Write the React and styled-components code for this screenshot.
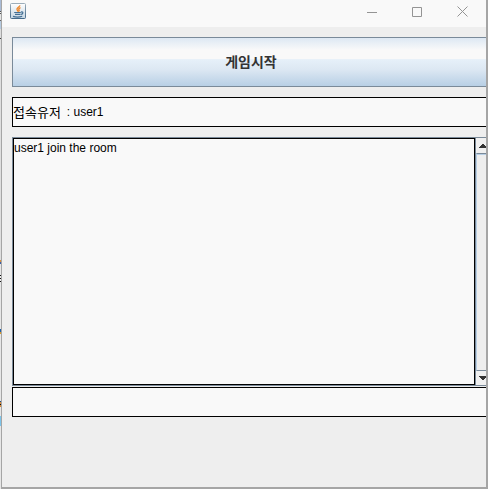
import React, { useState } from "react";
import styled, { createGlobalStyle } from "styled-components";

const GlobalStyle = createGlobalStyle`
  * { box-sizing: border-box; }
  body {
    margin: 0;
    background: #c9d3e0;
    color: #000;
    font: 12px/16px "Liberation Sans", "Noto Sans CJK KR", sans-serif;
  }
`;

const Desktop = styled.div`
  min-height: 100vh;
  display: grid;
  grid-template-columns: 1px minmax(0, 1fr);
`;

const Backdrop = styled.div`
  background: linear-gradient(
    #a9bbd6 0 11px, #555 11px 12px, #eee 12px 13px, #555 13px 14px,
    #e4e4e4 14px 20px, #666 20px 21px, #b5cae0 21px 29px, #ddd 29px 38px,
    #444 38px 39px, #dedede 39px 260px, #d68a3a 260px 262px, #3c5fa5 262px 264px,
    #e6e6e6 264px 275px, #111 275px 276px, #eee 276px 278px, #111 278px 279px,
    #eee 279px 281px, #111 281px 282px, #e6e6e6 282px 329px, #1c5fa8 329px 332px,
    #d99a2c 332px 334px, #e6e6e6 334px 401px, #234f86 401px 402px,
    #d68a3a 402px 404px, #111 404px 405px, #d68a3a 405px 407px, #e6e6e6 407px 416px,
    #7cc4ea 416px 426px, #e6e6e6 426px
  );
`;

const Window = styled.main`
  display: flex;
  flex-direction: column;
  background: #eee;
  border: solid #a5a5a5;
  border-width: 0 2px 2px 1px;
  overflow: hidden;
`;

const TitleBar = styled.header`
  height: 27px;
  display: flex;
  align-items: flex-start;
  justify-content: space-between;
  padding: 3px 1px 0 8px;
  background: #f9f9f9;
`;

const WindowControls = styled.div`
  display: flex;
`;

const ControlButton = styled.button`
  width: 45px;
  height: 16px;
  padding: 0;
  border: 0;
  background: transparent;
  color: #949494;
  display: grid;
  place-items: center;
`;

const Content = styled.section`
  display: flex;
  flex-direction: column;
  gap: 10px;
  padding: 10px 0 0 10px;
  margin-right: -4px;
`;

const StartButton = styled.button`
  height: 50px;
  padding: 0 0 2px;
  border: 1px solid #7a8a99;
  background: linear-gradient(#dde8f3 0%, #f9f9f9 25%, #f9f9f9 43%, #e6f0f9 45%, #dde8f3 65%, #b8cfe5 100%);
  color: #333;
  font: bold 14px/18px "Noto Sans CJK KR", sans-serif;
`;

const UserBar = styled.div`
  height: 30px;
  display: flex;
  align-items: center;
  gap: 6px;
  border: 1px solid #000;
  background: #f9f9f9;
`;

const UserLabel = styled.span`
  font: 13px/16px "Noto Sans CJK KR", sans-serif;
`;

const Room = styled.div`
  display: flex;
  flex-direction: column;
  gap: 1px;
`;

const LogPane = styled.div`
  height: 249px;
  display: grid;
  grid-template-columns: minmax(0, 1fr) 15px;
  border: 1px solid #7a8a99;
  border-right: 0;
`;

const Log = styled.textarea`
  height: 100%;
  margin: 0;
  padding: 1px 0;
  border: 1px solid #000;
  outline: 0;
  resize: none;
  overflow: hidden;
  background: #f9f9f9;
  color: #000;
  font: inherit;
`;

const ScrollBar = styled.div`
  display: grid;
  grid-template-rows: 15px 1fr 14px;
  border-left: 1px solid #7a8a99;
  background: #eee;
`;

const ScrollButton = styled.button`
  padding: 0;
  border: 0;
  background: #f0f0f0;
  color: #333;
  display: grid;
  place-items: center;
`;

const Track = styled.div`
  border: 1px solid #7a8a99;
  border-left-color: #b8cfe5;
  box-shadow: inset 0 1px #b8cfe5;
`;

const MessageInput = styled.input`
  width: 100%;
  height: 30px;
  padding: 0;
  border: 1px solid #000;
  border-radius: 0;
  outline: 0;
  background: #f9f9f9;
  font: inherit;
`;

const JavaIcon = () => (
  <svg width="16" height="16" viewBox="0 0 16 16" fill="none" aria-hidden="true">
    <defs>
      <linearGradient id="tile" x1="0" y1="0" x2="0" y2="1">
        <stop stopColor="#fff" />
        <stop offset="1" stopColor="#c5d5e2" />
      </linearGradient>
      <linearGradient id="edge" x1="0" y1="0" x2="0" y2="1">
        <stop stopColor="#9cadb9" />
        <stop offset="1" stopColor="#44698a" />
      </linearGradient>
    </defs>
    <rect x=".5" y=".5" width="15" height="15" rx="1" fill="url(#tile)" stroke="url(#edge)" />
    <path d="M10 2.3C9.5 4.2 6.4 4.8 7 6.6 7.2 7.4 8 7.8 8 8.8M10.5 4.7C8.7 5.4 8.4 6.2 9 6.8 9.5 7.4 9 8 8.5 8.4" stroke="#ee8424" strokeWidth="1.3" />
    <path d="M4.2 9.5h6.6M5 11.4h5.4M3 13.4c2.6.8 6.6.8 9.2-.1M11 9.1c2.6-.8 2.4 2-.2 2.3" stroke="#446f94" strokeWidth="1.2" />
  </svg>
);

const MinimizeIcon = () => (
  <svg width="11" height="11" viewBox="0 0 11 11" stroke="currentColor" aria-hidden="true">
    <path d="M0 6.5h10" />
  </svg>
);

const MaximizeIcon = () => (
  <svg width="11" height="11" viewBox="0 0 11 11" fill="none" stroke="currentColor" aria-hidden="true">
    <path d="M.5 1.5h9v9h-9z" />
  </svg>
);

const CloseIcon = () => (
  <svg width="11" height="11" viewBox="0 0 11 11" stroke="currentColor" aria-hidden="true">
    <path d="M.5.5l10 10M10.5.5l-10 10" />
  </svg>
);

const ArrowIcon = ({ down }) => (
  <svg width="8" height="4" viewBox="0 0 8 4" fill="currentColor" shapeRendering="crispEdges" aria-hidden="true">
    <path d={down ? "M0 0h8v1H7v1H6v1H5v1H3V3H2V2H1V1H0z" : "M3 0h2v1h1v1h1v1h1v1H0V3h1V2h1V1h1z"} />
  </svg>
);

export default function App() {
  const [message, setMessage] = useState("");

  return (
    <>
      <GlobalStyle />
      <Desktop>
        <Backdrop />
        <Window>
          <TitleBar>
            <JavaIcon />
            <WindowControls>
              <ControlButton type="button" aria-label="Minimize"><MinimizeIcon /></ControlButton>
              <ControlButton type="button" aria-label="Maximize"><MaximizeIcon /></ControlButton>
              <ControlButton type="button" aria-label="Close"><CloseIcon /></ControlButton>
            </WindowControls>
          </TitleBar>
          <Content>
            <StartButton type="button">게임시작</StartButton>
            <UserBar>
              <UserLabel>접속유저</UserLabel>
              <span>: user1</span>
            </UserBar>
            <Room>
              <LogPane>
                <Log readOnly aria-label="Room log" value="user1 join the room" />
                <ScrollBar>
                  <ScrollButton type="button" aria-label="Scroll up"><ArrowIcon /></ScrollButton>
                  <Track />
                  <ScrollButton type="button" aria-label="Scroll down"><ArrowIcon down /></ScrollButton>
                </ScrollBar>
              </LogPane>
              <MessageInput
                type="text"
                aria-label="Message"
                value={message}
                onChange={(event) => setMessage(event.target.value)}
              />
            </Room>
          </Content>
        </Window>
      </Desktop>
    </>
  );
}
